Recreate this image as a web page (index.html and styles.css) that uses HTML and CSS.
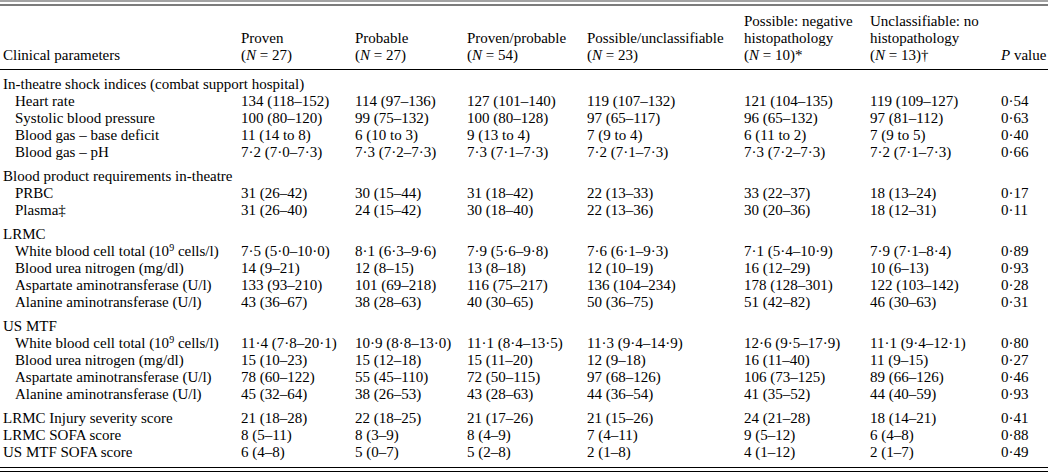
FILE: index.html
```html
<!DOCTYPE html>
<html lang="en">
<head>
<meta charset="utf-8">
<title>Clinical parameters</title>
<link rel="stylesheet" href="styles.css">
</head>
<body>
<div class="rule-top"></div>
<table class="data">
  <colgroup>
    <col class="c-label"><col class="c-a"><col class="c-b"><col class="c-c"><col class="c-d"><col class="c-e"><col class="c-f"><col class="c-p">
  </colgroup>
  <thead>
    <tr>
      <th class="lbl">Clinical parameters</th>
      <th>Proven<br>(<i>N</i> = 27)</th>
      <th>Probable<br>(<i>N</i> = 27)</th>
      <th>Proven/probable<br>(<i>N</i> = 54)</th>
      <th>Possible/unclassifiable<br>(<i>N</i> = 23)</th>
      <th>Possible: negative<br>histopathology<br>(<i>N</i> = 10)*</th>
      <th>Unclassifiable: no<br>histopathology<br>(<i>N</i> = 13)†</th>
      <th><i>P</i> value</th>
    </tr>
  </thead>
  <tbody>
    <tr class="grp first"><td class="lbl" colspan="8">In-theatre shock indices (combat support hospital)</td></tr>
    <tr><td class="sub">Heart rate</td><td>134 (118–152)</td><td>114 (97–136)</td><td>127 (101–140)</td><td>119 (107–132)</td><td>121 (104–135)</td><td>119 (109–127)</td><td>0·54</td></tr>
    <tr><td class="sub">Systolic blood pressure</td><td>100 (80–120)</td><td>99 (75–132)</td><td>100 (80–128)</td><td>97 (65–117)</td><td>96 (65–132)</td><td>97 (81–112)</td><td>0·63</td></tr>
    <tr><td class="sub">Blood gas – base deficit</td><td>11 (14 to 8)</td><td>6 (10 to 3)</td><td>9 (13 to 4)</td><td>7 (9 to 4)</td><td>6 (11 to 2)</td><td>7 (9 to 5)</td><td>0·40</td></tr>
    <tr><td class="sub">Blood gas – pH</td><td>7·2 (7·0–7·3)</td><td>7·3 (7·2–7·3)</td><td>7·3 (7·1–7·3)</td><td>7·2 (7·1–7·3)</td><td>7·3 (7·2–7·3)</td><td>7·2 (7·1–7·3)</td><td>0·66</td></tr>
    <tr class="grp"><td class="lbl" colspan="8">Blood product requirements in-theatre</td></tr>
    <tr><td class="sub">PRBC</td><td>31 (26–42)</td><td>30 (15–44)</td><td>31 (18–42)</td><td>22 (13–33)</td><td>33 (22–37)</td><td>18 (13–24)</td><td>0·17</td></tr>
    <tr><td class="sub">Plasma‡</td><td>31 (26–40)</td><td>24 (15–42)</td><td>30 (18–40)</td><td>22 (13–36)</td><td>30 (20–36)</td><td>18 (12–31)</td><td>0·11</td></tr>
    <tr class="grp"><td class="lbl" colspan="8">LRMC</td></tr>
    <tr><td class="sub">White blood cell total (10<sup>9</sup> cells/l)</td><td>7·5 (5·0–10·0)</td><td>8·1 (6·3–9·6)</td><td>7·9 (5·6–9·8)</td><td>7·6 (6·1–9·3)</td><td>7·1 (5·4–10·9)</td><td>7·9 (7·1–8·4)</td><td>0·89</td></tr>
    <tr><td class="sub">Blood urea nitrogen (mg/dl)</td><td>14 (9–21)</td><td>12 (8–15)</td><td>13 (8–18)</td><td>12 (10–19)</td><td>16 (12–29)</td><td>10 (6–13)</td><td>0·93</td></tr>
    <tr><td class="sub">Aspartate aminotransferase (U/l)</td><td>133 (93–210)</td><td>101 (69–218)</td><td>116 (75–217)</td><td>136 (104–234)</td><td>178 (128–301)</td><td>122 (103–142)</td><td>0·28</td></tr>
    <tr><td class="sub">Alanine aminotransferase (U/l)</td><td>43 (36–67)</td><td>38 (28–63)</td><td>40 (30–65)</td><td>50 (36–75)</td><td>51 (42–82)</td><td>46 (30–63)</td><td>0·31</td></tr>
    <tr class="grp"><td class="lbl" colspan="8">US MTF</td></tr>
    <tr><td class="sub">White blood cell total (10<sup>9</sup> cells/l)</td><td>11·4 (7·8–20·1)</td><td>10·9 (8·8–13·0)</td><td>11·1 (8·4–13·5)</td><td>11·3 (9·4–14·9)</td><td>12·6 (9·5–17·9)</td><td>11·1 (9·4–12·1)</td><td>0·80</td></tr>
    <tr><td class="sub">Blood urea nitrogen (mg/dl)</td><td>15 (10–23)</td><td>15 (12–18)</td><td>15 (11–20)</td><td>12 (9–18)</td><td>16 (11–40)</td><td>11 (9–15)</td><td>0·27</td></tr>
    <tr><td class="sub">Aspartate aminotransferase (U/l)</td><td>78 (60–122)</td><td>55 (45–110)</td><td>72 (50–115)</td><td>97 (68–126)</td><td>106 (73–125)</td><td>89 (66–126)</td><td>0·46</td></tr>
    <tr><td class="sub">Alanine aminotransferase (U/l)</td><td>45 (32–64)</td><td>38 (26–53)</td><td>43 (28–63)</td><td>44 (36–54)</td><td>41 (35–52)</td><td>44 (40–59)</td><td>0·93</td></tr>
    <tr class="grp"><td class="lbl">LRMC Injury severity score</td><td>21 (18–28)</td><td>22 (18–25)</td><td>21 (17–26)</td><td>21 (15–26)</td><td>24 (21–28)</td><td>18 (14–21)</td><td>0·41</td></tr>
    <tr><td class="lbl">LRMC SOFA score</td><td>8 (5–11)</td><td>8 (3–9)</td><td>8 (4–9)</td><td>7 (4–11)</td><td>9 (5–12)</td><td>6 (4–8)</td><td>0·88</td></tr>
    <tr class="last"><td class="lbl">US MTF SOFA score</td><td>6 (4–8)</td><td>5 (0–7)</td><td>5 (2–8)</td><td>2 (1–8)</td><td>4 (1–12)</td><td>2 (1–7)</td><td>0·49</td></tr>
  </tbody>
</table>
<div class="rule-bottom"></div>
</body>
</html>
```
FILE: styles.css
```css
html, body {
  margin: 0;
  padding: 0;
  background: #fff;
}
body {
  font-family: "Liberation Serif", "Times New Roman", serif;
  font-size: 15px;
  color: #000;
  width: 1048px;
}
.rule-top {
  height: 2px;
  border-top: 2px solid #a3a3a3;
  border-bottom: 2px solid #7c7c7c;
}
.data {
  width: 1048px;
  table-layout: fixed;
  border-collapse: collapse;
  border-spacing: 0;
}
.c-label { width: 241px; }
.c-a { width: 114px; }
.c-b { width: 112px; }
.c-c { width: 120px; }
.c-d { width: 157px; }
.c-e { width: 126px; }
.c-f { width: 131px; }
.c-p { width: 47px; }
.data th,
.data td {
  padding: 0;
  text-align: left;
  white-space: nowrap;
  line-height: 17px;
  font-weight: normal;
}
.data thead th {
  vertical-align: bottom;
  padding-top: 7px;
  padding-bottom: 5px;
  border-bottom: 1px solid #000;
}
.data .lbl { padding-left: 3px; }
.data .sub { padding-left: 15px; }
.data tr.grp td { padding-top: 7px; }
.data tr.grp.first td { padding-top: 6px; }
.data tr.last td {
  padding-bottom: 6px;
  border-bottom: 1px solid #000;
}
.data sup {
  font-size: 10px;
  line-height: 0;
  vertical-align: 5px;
}
.rule-bottom {
  margin-top: 3px;
  border-top: 1px solid #000;
}
```
